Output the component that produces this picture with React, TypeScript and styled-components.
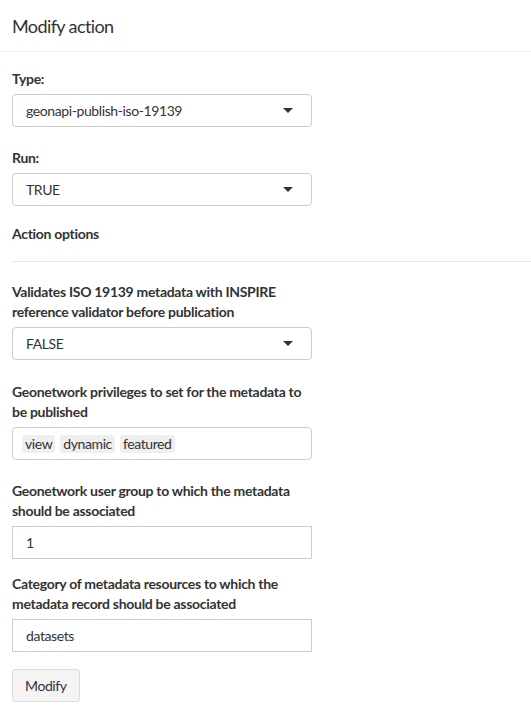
import React from 'react';
import styled, { createGlobalStyle } from 'styled-components';

const GlobalStyle = createGlobalStyle`
  html, body {
    margin: 0;
    padding: 0;
    background: #ffffff;
  }
  body {
    font-family: Lato, "Liberation Sans", sans-serif;
    font-size: 14px;
    line-height: 20px;
    letter-spacing: -0.4px;
    color: #333333;
  }
`;

const Modal = styled.div`
  width: 531px;
  background: #ffffff;
`;

const Header = styled.div`
  height: 52px;
  box-sizing: border-box;
  padding: 0 12px;
  display: flex;
  align-items: center;
  border-bottom: 1px solid #f2f2f2;
`;

const Title = styled.h4`
  margin: 0;
  font-size: 18px;
  font-weight: 400;
  letter-spacing: -0.6px;
  color: #333333;
`;

const Body = styled.div`
  padding: 17px 0 14px 12px;
`;

const Group = styled.div<{ gap: number }>`
  width: 300px;
  margin-bottom: ${props => props.gap}px;
`;

const Label = styled.label`
  display: block;
  margin-bottom: 5px;
  font-weight: 700;
  line-height: 20px;
  letter-spacing: -0.3px;
  color: #333333;
`;

const SectionTitle = styled.div`
  font-weight: 700;
  line-height: 20px;
  letter-spacing: -0.3px;
`;

const Divider = styled.hr`
  margin: 17px 0 20px;
  border: 0;
  border-top: 1px solid #e6e6e6;
`;

const Box = styled.div`
  height: 33px;
  box-sizing: border-box;
  border: 1px solid #cccccc;
  border-radius: 4px;
  padding: 0 12px 0 13px;
  display: flex;
  align-items: center;
  gap: 4px;
  color: #333333;
`;

const TextBox = styled(Box)`
  border-radius: 0;
  padding-left: 13px;
`;

const Value = styled.span`
  flex: 1;
`;

const Caret = styled.span`
  width: 0;
  height: 0;
  margin-right: 6px;
  border-left: 5px solid transparent;
  border-right: 5px solid transparent;
  border-top: 5px solid #333333;
`;

const Tags = styled(Box)`
  padding-left: 9px;
  gap: 5px;
`;

const Tag = styled.span`
  background: #efefef;
  border-radius: 3px;
  padding: 0 3px;
  line-height: 18px;
  color: #333333;
`;

const Button = styled.button`
  height: 33px;
  padding: 0 12px;
  font-family: inherit;
  font-size: 14px;
  letter-spacing: -0.4px;
  color: #333333;
  background: #f4f4f4;
  border: 1px solid #dddddd;
  border-radius: 3px;
`;

const Select: React.FC<{ value: string }> = ({ value }) => (
  <Box>
    <Value>{value}</Value>
    <Caret />
  </Box>
);

export default function App() {
  return (
    <Modal>
      <GlobalStyle />
      <Header>
        <Title>Modify action</Title>
      </Header>
      <Body>
        <Group gap={21}>
          <Label>Type:</Label>
          <Select value="geonapi-publish-iso-19139" />
        </Group>
        <Group gap={18}>
          <Label>Run:</Label>
          <Select value="TRUE" />
        </Group>
        <SectionTitle>Action options</SectionTitle>
        <Divider />
        <Group gap={22}>
          <Label>Validates ISO 19139 metadata with INSPIRE reference validator before publication</Label>
          <Select value="FALSE" />
        </Group>
        <Group gap={21}>
          <Label>Geonetwork privileges to set for the metadata to be published</Label>
          <Tags>
            <Tag>view</Tag>
            <Tag>dynamic</Tag>
            <Tag>featured</Tag>
          </Tags>
        </Group>
        <Group gap={15}>
          <Label>Geonetwork user group to which the metadata should be associated</Label>
          <TextBox>1</TextBox>
        </Group>
        <Group gap={17}>
          <Label>Category of metadata resources to which the metadata record should be associated</Label>
          <TextBox>datasets</TextBox>
        </Group>
        <Button>Modify</Button>
      </Body>
    </Modal>
  );
}
